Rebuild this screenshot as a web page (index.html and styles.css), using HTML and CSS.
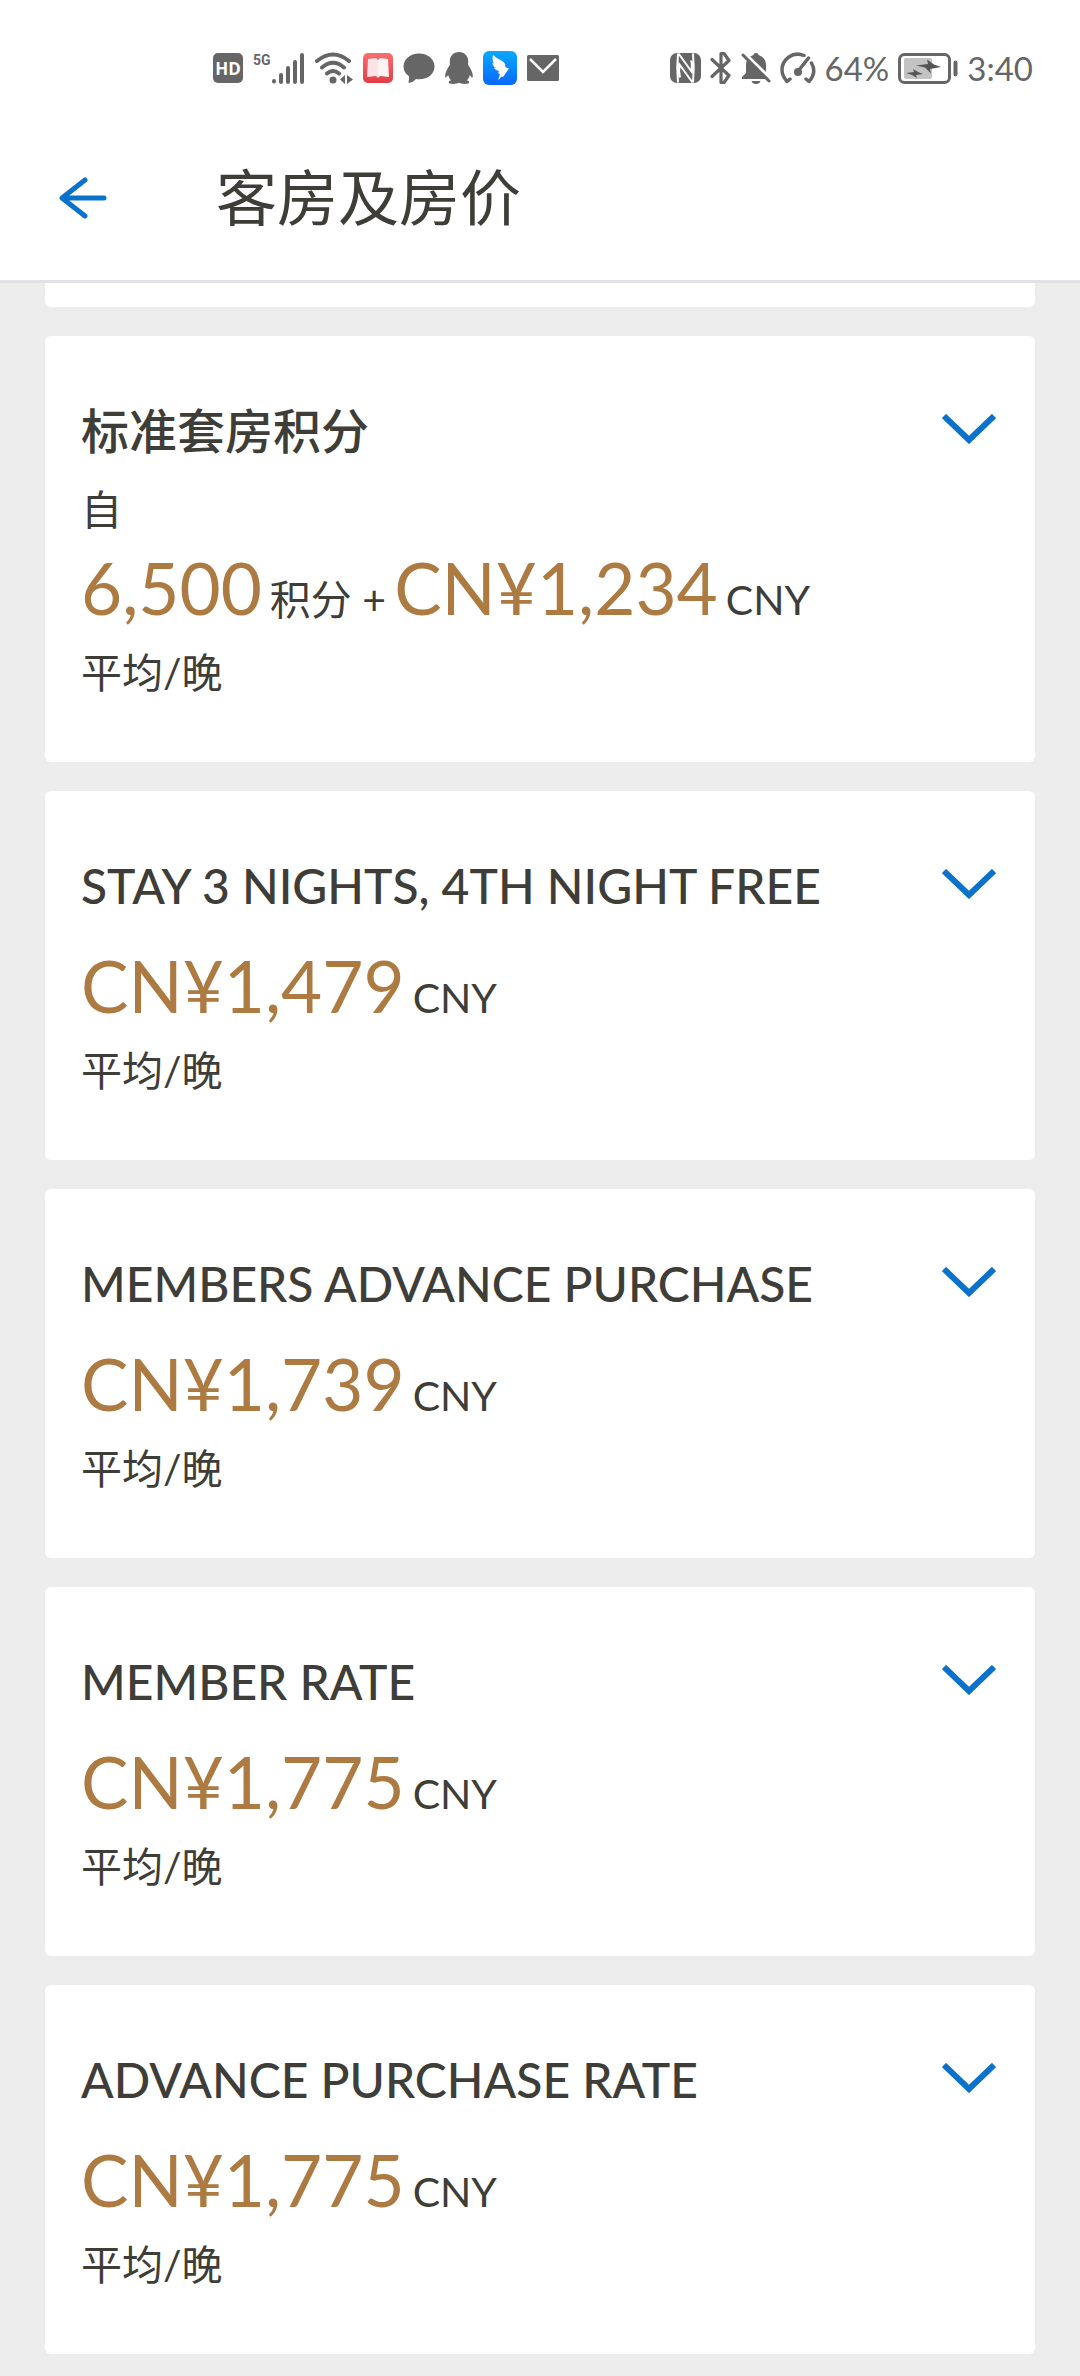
FILE: index.html
```html
<!DOCTYPE html>
<html lang="zh-CN">
<head>
<meta charset="utf-8">
<meta name="viewport" content="width=device-width, initial-scale=1">
<title>客房及房价</title>
<link rel="stylesheet" href="styles.css">
</head>
<body>
<svg class="defs" aria-hidden="true">
  <symbol id="chevron" viewBox="0 0 54 30"><path d="M2 2 27 26 52 2" fill="none" stroke="#0b72cc" stroke-width="6"/></symbol>
</svg>
<header class="header">
  <div class="status">
    <div class="status-group status-left">
      <span class="hd">HD</span>
      <span class="net"><span class="net-label">5G</span>
        <svg width="34" height="36" viewBox="0 0 34 36" fill="none" stroke="#666" stroke-width="4" stroke-linecap="round"><path d="M3 31v.500M10 25v7M17 18v14M24 12v20M31 5v27"/></svg>
      </span>
      <svg class="wifi" width="38" height="36" viewBox="0 0 38 36"><g fill="none" stroke="#666" stroke-width="4" stroke-linecap="round"><path d="M2 11Q18 -2 34 11M7 17.500Q18 8 29 17.500M12 23.500Q18 18.500 24 23.500"/></g><circle cx="18" cy="30" r="3.500" fill="#666"/><path d="M30 25v9l-5-4.500zM32 25v9l6-4.500z" fill="#666"/></svg>
      <svg width="30" height="36" viewBox="0 0 30 36"><defs><linearGradient id="red" x2="0" y2="1"><stop stop-color="#f87070"/><stop offset="1" stop-color="#e33c44"/></linearGradient></defs><rect y="3" width="30" height="30" rx="5" fill="url(#red)"/><path d="M5 9l8-1 2 2v18l-2-2-9 1z" fill="#fde3e8"/><path d="M25 9l-8-1-2 2v18l2-2 9 1z" fill="#fff3f5"/></svg>
      <svg width="32" height="36" viewBox="0 0 32 36"><path d="M16 3.500C7 3.500.500 9.500.500 16.500c0 4 2 7.500 5.500 9.800.500 2.500-.500 4.500-.500 6.500 3 0 5.500-1.500 7.500-3.800 1 .200 2 .300 3 .300 9 0 15.500-5.500 15.500-12.800S25 3.500 16 3.500z" fill="#666"/></svg>
      <svg width="28" height="36" viewBox="0 0 28 36"><path d="M14 2C8.500 2 4.800 6 4.800 11v4C2 19 0 23 .200 26.500c.100 1.500 1.200 1.200 3-1.500.500 2 1.500 4 3 5.300-3 .800-3.500 3.200-.200 3.500 3 .300 6.500 0 8-1 1.500 1 5 1.300 8 1 3.300-.300 2.800-2.700-.200-3.500 1.500-1.300 2.500-3.300 3-5.300 1.800 2.700 2.900 3 3 1.500.200-3.500-1.800-7.500-4.600-11.500v-4C23.200 6 19.500 2 14 2z" fill="#666"/></svg>
      <svg width="34" height="36" viewBox="0 0 34 36"><defs><linearGradient id="blue" x2="0" y2="1"><stop stop-color="#0aa9ff"/><stop offset="1" stop-color="#0867fb"/></linearGradient></defs><rect y="1" width="34" height="34" rx="6" fill="url(#blue)"/><path d="M10 5c1 2 11 6 12 9 .500 1.500 0 3 .500 3.200l3.500 1.300-6 8.500-1.500-.500-3.500 4 2-6.500-2-.700c1-1.300 1-2 .500-2.500-3-.800-4-2-4.500-3.300l2 .200C10.500 16.500 9.500 15 9.300 13l1.500.800C9.500 11 9.200 8 10 5z" fill="#fff"/></svg>
      <svg width="32" height="36" viewBox="0 0 32 36"><rect y="5" width="32" height="26" rx="1.500" fill="#666"/><path d="M3 9l13 13L29 9" fill="none" stroke="#fff" stroke-width="2.500"/></svg>
    </div>
    <div class="status-group status-right">
      <svg width="31" height="36" viewBox="0 0 31 36"><rect y="3" width="31" height="30" rx="7" fill="#666"/><path d="M8 3.500q-1.500 14 0 29M23 32.500q1.500-14 0-29M8.500 3.500l13 18q1-7-.500-11M22.500 32.500l-13-18q-1 7 .500 13" fill="none" stroke="#fff" stroke-width="2"/></svg>
      <svg width="22" height="36" viewBox="0 0 22 36"><path d="M2 9.500 19 25.500 14 32.500 11 32.500V3.500H14L19 10.500 2 26.500" fill="none" stroke="#666" stroke-width="3.200" stroke-linecap="round" stroke-linejoin="round"/></svg>
      <svg width="30" height="36" viewBox="0 0 30 36"><path d="M15 3c-1.500 0-2.500.800-2.500 2C8 6.500 5 10 5 15v8l-4 4v2h28l-4-5v-9c0-5-3-8.500-7.500-10 0-1.200-1-2-2.500-2zM10.500 31h9c-.500 2-2 3-4.500 3s-4-1-4.500-3z" fill="#666"/><path d="M3 2.500 31 30" stroke="#fff" stroke-width="3"/><path d="M2 5 28 31" stroke="#666" stroke-width="3" stroke-linecap="round"/></svg>
      <svg width="36" height="36" viewBox="0 0 36 36"><g fill="none" stroke="#666" stroke-width="3.500" stroke-linecap="round" stroke-linejoin="round"><path d="M24 5.500C13 1 2 9 2 20c0 4.500 2 8 5 11.500L10 29M31.500 13c4 7 2.500 13-2.500 18.500L26 29M28.500 8 19 20"/></g><circle cx="18" cy="22" r="4" fill="#666"/></svg>
      <span class="status-text">64%</span>
      <svg width="60" height="36" viewBox="0 0 60 36"><rect x="1.500" y="4.500" width="50" height="28" rx="5" fill="none" stroke="#666" stroke-width="3"/><rect x="6" y="8" width="28" height="21" rx="2" fill="#c3c3c3"/><path d="M18 15.500 30 14 29 9.500 36 14.500 43 17 32 19 33 23.500 27 17.500zM8 23l8-1-1-3 5 3 5 2-7 1 1 3-5-3z" fill="#555"/><path d="M57.500 12.500v12" stroke="#666" stroke-width="4" stroke-linecap="round"/></svg>
      <span class="status-text">3:40</span>
    </div>
  </div>
  <div class="bar">
    <button class="back" type="button" aria-label="返回">
      <svg width="48" height="42" viewBox="0 0 48 42" fill="none" stroke="#0b72cc" stroke-width="5" stroke-linecap="round" stroke-linejoin="round"><path d="M26 3 3 21 26 39M4 21h41"/></svg>
    </button>
    <h1 class="title">客房及房价</h1>
  </div>
</header>
<main class="rates">
  <div class="card card-tail"></div>
  <article class="card">
    <div class="card-head"><h2 class="name">标准套房积分</h2><button class="toggle" type="button" aria-label="展开"><svg width="54" height="30"><use href="#chevron"/></svg></button></div>
    <p class="note">自</p>
    <p class="price"><span class="amount">6,500</span><span class="unit">积分 +</span><span class="amount">CN¥1,234</span><span class="unit">CNY</span></p>
    <p class="note">平均/晚</p>
  </article>
  <article class="card">
    <div class="card-head"><h2 class="name">STAY 3 NIGHTS, 4TH NIGHT FREE</h2><button class="toggle" type="button" aria-label="展开"><svg width="54" height="30"><use href="#chevron"/></svg></button></div>
    <p class="price"><span class="amount">CN¥1,479</span><span class="unit">CNY</span></p>
    <p class="note">平均/晚</p>
  </article>
  <article class="card">
    <div class="card-head"><h2 class="name">MEMBERS ADVANCE PURCHASE</h2><button class="toggle" type="button" aria-label="展开"><svg width="54" height="30"><use href="#chevron"/></svg></button></div>
    <p class="price"><span class="amount">CN¥1,739</span><span class="unit">CNY</span></p>
    <p class="note">平均/晚</p>
  </article>
  <article class="card">
    <div class="card-head"><h2 class="name">MEMBER RATE</h2><button class="toggle" type="button" aria-label="展开"><svg width="54" height="30"><use href="#chevron"/></svg></button></div>
    <p class="price"><span class="amount">CN¥1,775</span><span class="unit">CNY</span></p>
    <p class="note">平均/晚</p>
  </article>
  <article class="card">
    <div class="card-head"><h2 class="name">ADVANCE PURCHASE RATE</h2><button class="toggle" type="button" aria-label="展开"><svg width="54" height="30"><use href="#chevron"/></svg></button></div>
    <p class="price"><span class="amount">CN¥1,775</span><span class="unit">CNY</span></p>
    <p class="note">平均/晚</p>
  </article>
</main>
</body>
</html>
```
FILE: styles.css
```css
* { box-sizing: border-box; }
body {
  margin: 0;
  background: #ededed;
  color: #3e3d38;
  font-family: Lato, "Noto Sans CJK SC", sans-serif;
}
h1, h2, p { margin: 0; font-weight: 400; }
button { padding: 0; border: 0; background: none; cursor: pointer; }
svg { display: block; flex: none; }
.defs { width: 0; height: 0; position: absolute; }

.header { background: #fff; border-bottom: 3px solid #e0e2e7; }
.status {
  display: flex;
  justify-content: space-between;
  padding: 50px 47px 29px 213px;
  color: #666;
}
.status-group { display: flex; align-items: center; gap: 10px; height: 36px; }
.status-right { gap: 9px; }
.hd {
  width: 30px;
  height: 30px;
  border-radius: 5px;
  background: #666;
  color: #fff;
  font: 700 17px/31px "Open Sans", sans-serif;
  text-align: center;
}
.net { display: flex; }
.net-label { font: 700 14px/20px Roboto, sans-serif; }
.status-text { font-size: 33px; line-height: 36px; }

.bar { display: flex; align-items: center; gap: 109px; height: 165px; padding: 0 59px; }
.title { font-size: 61px; line-height: 80px; }

.rates { display: flex; flex-direction: column; gap: 29px; padding: 0 45px 22px; }
.card { padding: 66px 36px 61px; border-radius: 6px; background: #fff; }
.card-tail { height: 24px; padding: 0; border-radius: 0 0 6px 6px; }
.card-head { display: flex; justify-content: space-between; align-items: center; margin-bottom: 21px; }
.name { font-size: 48px; font-weight: 500; line-height: 58px; }
.toggle { padding: 0 3px 4px 0; }
.note { font-size: 41px; line-height: 57px; }
.price { display: flex; align-items: baseline; gap: 8px; margin-bottom: 6px; }
.amount { color: #ad7a42; font-size: 71px; line-height: 100px; }
.unit { font-size: 41px; line-height: 57px; }
```
